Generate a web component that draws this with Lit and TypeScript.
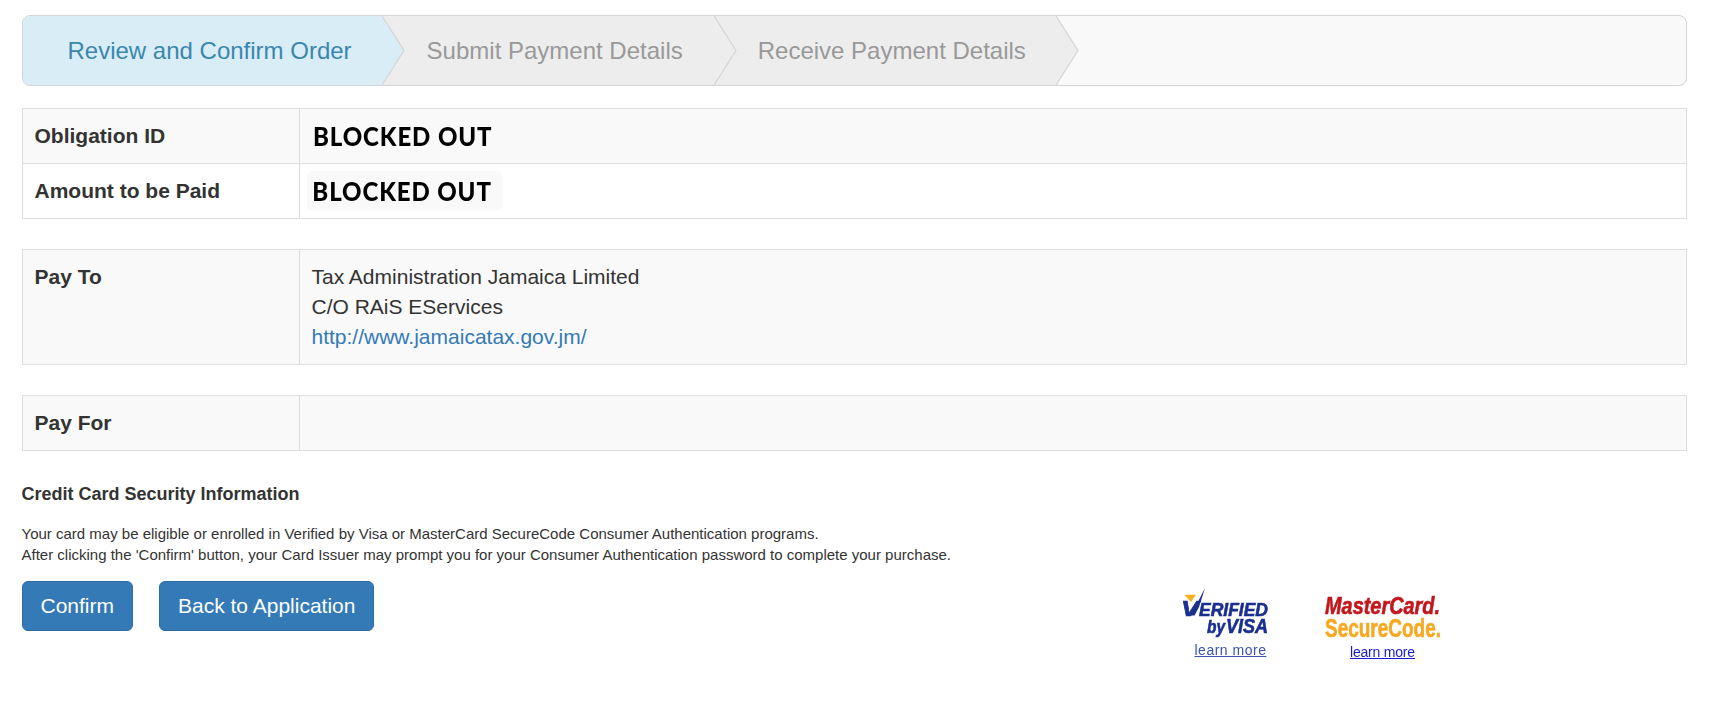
import { LitElement, css, html } from "lit"
import { customElement } from "lit/decorators.js"

const steps = ["Review and Confirm Order", "Submit Payment Details", "Receive Payment Details"]

@customElement("app-root")
export class AppRoot extends LitElement {
  renderStep(label: string, i: number) {
    return html`
      <div class="step step-${i}">
        ${label}
        <svg class="chevron" viewBox="0 0 23 70" preserveAspectRatio="none">
          <polygon points="0,0 22,35 0,70" />
          <polyline points="0,0 22,35 0,70" />
        </svg>
      </div>
    `
  }

  render() {
    return html`
      <div class="wizard">${steps.map((s, i) => this.renderStep(s, i))}</div>

      <table>
        <tr class="odd">
          <th>Obligation ID</th>
          <td><span class="blocked">BLOCKED OUT</span></td>
        </tr>
        <tr>
          <th>Amount to be Paid</th>
          <td><span class="blocked shaded">BLOCKED OUT</span></td>
        </tr>
      </table>

      <table>
        <tr class="odd">
          <th>Pay To</th>
          <td>
            Tax Administration Jamaica Limited<br />
            C/O RAiS EServices<br />
            <a href="#">http://www.jamaicatax.gov.jm/</a>
          </td>
        </tr>
      </table>

      <table>
        <tr class="odd">
          <th>Pay For</th>
          <td></td>
        </tr>
      </table>

      <h4>Credit Card Security Information</h4>
      <p>
        Your card may be eligible or enrolled in Verified by Visa or MasterCard SecureCode Consumer Authentication programs.<br />
        After clicking the 'Confirm' button, your Card Issuer may prompt you for your Consumer Authentication password to complete your purchase.
      </p>

      <div class="actions">
        <div class="buttons">
          <button>Confirm</button>
          <button>Back to Application</button>
        </div>
        <div class="logos">
          <div class="logo visa">
            <svg width="90" height="52" viewBox="0 0 90 52">
              <polygon points="3.3,7.7 15,7.7 10,15" fill="#f6b221" />
              <polygon points="10,28.5 24,1 18,20 13.5,28.5" fill="#1a2f8f" />
              <text class="mark navy" x="0" y="28.5" font-size="22" textLength="18" lengthAdjust="spacingAndGlyphs">V</text>
              <text class="mark navy" x="18" y="28.5" font-size="18" textLength="69" lengthAdjust="spacingAndGlyphs">ERIFIED</text>
              <text class="mark navy" x="26" y="46" font-size="18" textLength="18" lengthAdjust="spacingAndGlyphs">by</text>
              <text class="mark navy" x="45" y="46" font-size="20" textLength="42" lengthAdjust="spacingAndGlyphs">VISA</text>
            </svg>
            <a class="more grey" href="#">learn more</a>
          </div>
          <div class="logo mc">
            <svg width="120" height="44" viewBox="0 0 120 44">
              <text class="mark red" x="1" y="18" font-size="24" textLength="115" lengthAdjust="spacingAndGlyphs">MasterCard.</text>
              <text class="mark orange" x="1" y="41" font-size="26" textLength="116" lengthAdjust="spacingAndGlyphs">SecureCode.</text>
            </svg>
            <a class="more" href="#">learn more</a>
          </div>
        </div>
      </div>
    `
  }

  static styles = css`
    :host {
      display: block;
      padding: 15px 28px 0 21.5px;
      font-family: "Liberation Sans", Arial, sans-serif;
      color: #333;
      background: #fff;
    }

    .wizard {
      display: flex;
      height: 71px;
      box-sizing: border-box;
      border: 1px solid #d4d4d4;
      border-radius: 8px;
      background: #f9f9f9;
      overflow: hidden;
    }
    .step {
      position: relative;
      display: flex;
      align-items: center;
      box-sizing: border-box;
      padding: 0 31px 0 45px;
      background: #ededed;
      color: #999;
      font-size: 24px;
      white-space: nowrap;
    }
    .step-0 {
      padding-right: 30px;
      background: #d9edf7;
      color: #3a87ad;
    }
    .step-2 {
      padding-left: 44px;
      padding-right: 30px;
    }
    .chevron {
      position: absolute;
      top: 0;
      left: 100%;
      width: 23px;
      height: 100%;
      z-index: 1;
    }
    .chevron polygon {
      fill: #ededed;
    }
    .step-0 .chevron polygon {
      fill: #d9edf7;
    }
    .chevron polyline {
      fill: none;
      stroke: #d4d4d4;
      stroke-width: 1.2;
    }

    table {
      width: 100%;
      margin-top: 30px;
      border-collapse: collapse;
      font-size: 21px;
      line-height: 30px;
    }
    .wizard + table {
      margin-top: 22px;
    }
    th,
    td {
      padding: 12px;
      border: 1px solid #ddd;
      text-align: left;
      vertical-align: top;
    }
    th {
      width: 252px;
      font-weight: bold;
    }
    .odd {
      background: #f9f9f9;
    }
    a {
      color: #337ab7;
      text-decoration: none;
    }

    .blocked {
      display: inline-block;
      vertical-align: top;
      margin-left: 1px;
      font-family: Lato, sans-serif;
      font-weight: 900;
      font-size: 27px;
      line-height: 30px;
      color: #000;
      letter-spacing: 1px;
      transform: scaleX(0.89);
      transform-origin: left center;
    }
    .shaded {
      margin: -5px -11px -5px -5px;
      padding: 5px 11px 5px 6px;
      border-radius: 6px;
      background: #f9f9f9;
    }

    h4 {
      margin: 31px 0 0;
      font-size: 18px;
      line-height: 24px;
      font-weight: bold;
    }
    p {
      margin: 17px 0 0;
      font-size: 15px;
      line-height: 21px;
    }

    .actions {
      display: flex;
      margin-top: 16px;
    }
    .buttons {
      display: flex;
      gap: 26px;
      align-items: flex-start;
    }
    button {
      height: 50px;
      padding: 0 18px;
      border: 1px solid #2e6da4;
      border-radius: 6px;
      background: #337ab7;
      color: #fff;
      font: 21px "Liberation Sans", Arial, sans-serif;
    }
    .logos {
      display: flex;
      margin-left: 807px;
      gap: 53px;
    }
    .logo {
      display: flex;
      flex-direction: column;
      align-items: center;
    }
    .logo svg {
      display: block;
      overflow: visible;
      filter: blur(0.4px);
    }
    .visa {
      padding-top: 6px;
    }
    .mc {
      padding-top: 15px;
    }
    .mark {
      font-family: "Liberation Sans", Arial, sans-serif;
      font-weight: bold;
      font-style: italic;
      stroke-width: 0.6px;
    }
    .navy {
      fill: #1a2f8f;
      stroke: #1a2f8f;
    }
    .red {
      fill: #c4161c;
      stroke: #c4161c;
    }
    .orange {
      font-style: normal;
      fill: #f7a823;
      stroke: #f7a823;
    }
    .more {
      margin-top: 5px;
      margin-right: 4px;
      font-size: 14px;
      line-height: 15px;
      color: #1a1ad6;
      text-decoration: underline;
      letter-spacing: -0.2px;
      filter: blur(0.3px);
    }
    .more.grey {
      margin-top: 4px;
      margin-right: 0;
      margin-left: 8px;
      letter-spacing: 0.5px;
      color: #3a53b0;
    }
  `
}

declare global {
  interface HTMLElementTagNameMap {
    "app-root": AppRoot
  }
}
